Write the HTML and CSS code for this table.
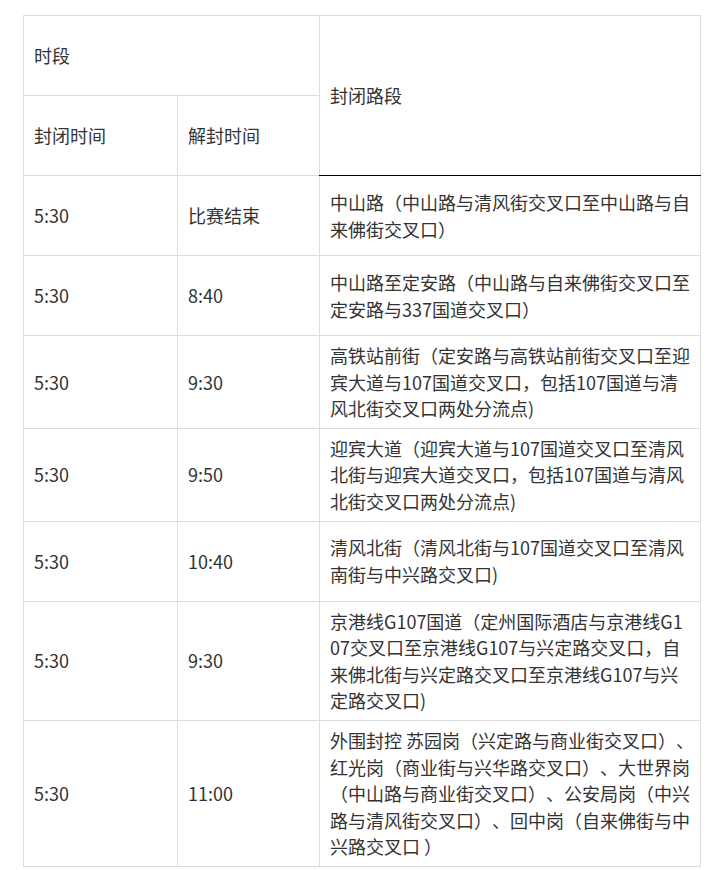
FILE: index.html
```html
<!DOCTYPE html>
<html lang="zh-CN">
<head>
<meta charset="utf-8">
<title>封闭路段</title>
<link rel="stylesheet" href="styles.css">
</head>
<body>
<div class="page">
  <table class="closures">
    <colgroup>
      <col class="c-close">
      <col class="c-open">
      <col class="c-road">
    </colgroup>
    <thead>
      <tr>
        <th colspan="2">时段</th>
        <th rowspan="2" class="road-head">封闭路段</th>
      </tr>
      <tr>
        <th>封闭时间</th>
        <th>解封时间</th>
      </tr>
    </thead>
    <tbody>
      <tr>
        <td>5:30</td>
        <td>比赛结束</td>
        <td class="road">中山路（中山路与清风街交叉口至中山路与自<br>来佛街交叉口）</td>
      </tr>
      <tr>
        <td>5:30</td>
        <td>8:40</td>
        <td class="road">中山路至定安路（中山路与自来佛街交叉口至<br>定安路与337国道交叉口）</td>
      </tr>
      <tr>
        <td>5:30</td>
        <td>9:30</td>
        <td class="road">高铁站前街（定安路与高铁站前街交叉口至迎<br>宾大道与107国道交叉口，包括107国道与清<br>风北街交叉口两处分流点)</td>
      </tr>
      <tr>
        <td>5:30</td>
        <td>9:50</td>
        <td class="road">迎宾大道（迎宾大道与107国道交叉口至清风<br>北街与迎宾大道交叉口，包括107国道与清风<br>北街交叉口两处分流点)</td>
      </tr>
      <tr>
        <td>5:30</td>
        <td>10:40</td>
        <td class="road">清风北街（清风北街与107国道交叉口至清风<br>南街与中兴路交叉口)</td>
      </tr>
      <tr>
        <td>5:30</td>
        <td>9:30</td>
        <td class="road">京港线G107国道（定州国际酒店与京港线G1<br>07交叉口至京港线G107与兴定路交叉口，自<br>来佛北街与兴定路交叉口至京港线G107与兴<br>定路交叉口)</td>
      </tr>
      <tr>
        <td>5:30</td>
        <td>11:00</td>
        <td class="road">外围封控 苏园岗（兴定路与商业街交叉口）、<br>红光岗（商业街与兴华路交叉口）、大世界岗<br>（中山路与商业街交叉口）、公安局岗（中兴<br>路与清风街交叉口）、回中岗（自来佛街与中<br>兴路交叉口 ）</td>
      </tr>
    </tbody>
  </table>
</div>
</body>
</html>
```

FILE: styles.css
```css
html, body {
  margin: 0;
  padding: 0;
  background: #ffffff;
}

body {
  font-family: "Noto Sans CJK SC", "Noto Sans", sans-serif;
  color: #333333;
  font-size: 18px;
  line-height: 26.6px;
  text-spacing-trim: space-all;
}

.page {
  padding: 15px 14px 0 23px;
}

.closures {
  border-collapse: collapse;
  table-layout: fixed;
  width: 677px;
}

.c-close { width: 154px; }
.c-open { width: 142px; }
.c-road { width: 381px; }

.closures tr {
  height: 80px;
}

.closures th,
.closures td {
  border: 1px solid #dddddd;
  padding: 6px 10px;
  text-align: left;
  vertical-align: middle;
  font-weight: normal;
}

.closures th.road-head {
  border-bottom: 1px solid #000000;
}

.road {
  white-space: nowrap;
}
```
